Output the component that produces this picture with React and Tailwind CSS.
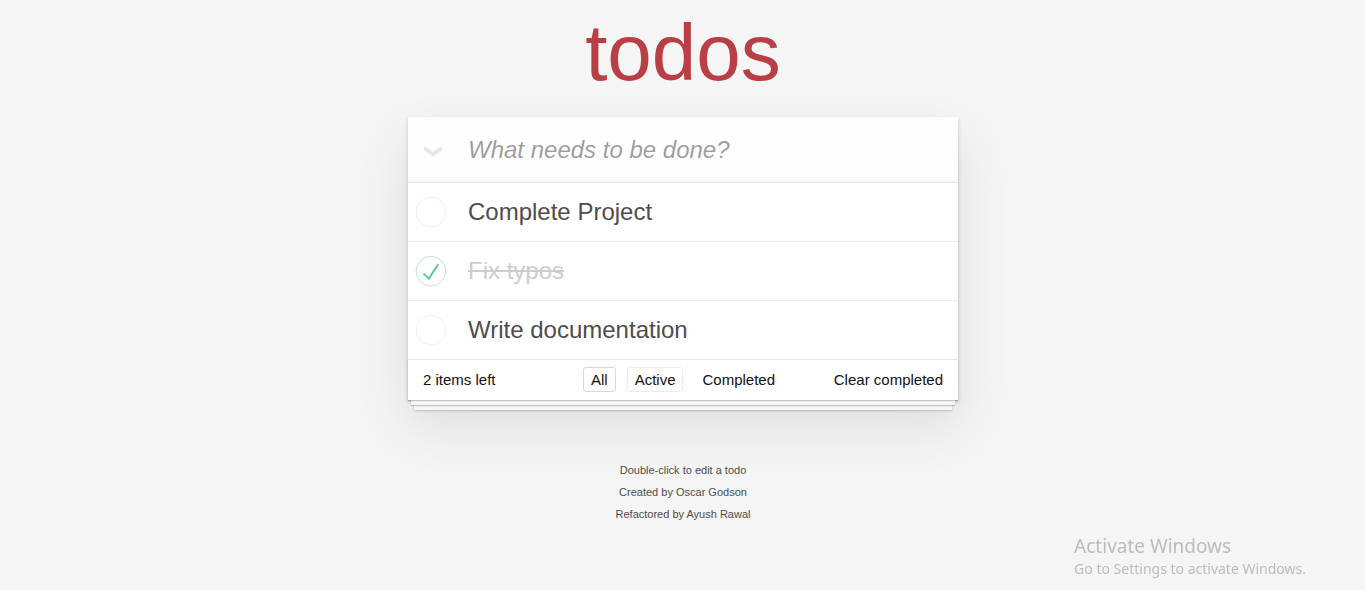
import { useState } from "react";

const initialTodos = [
  { id: 1, title: "Complete Project", done: false },
  { id: 2, title: "Fix typos", done: true },
  { id: 3, title: "Write documentation", done: false },
];

const filters = [
  { name: "All", border: "border-[#efd0d2]" },
  { name: "Active", border: "border-[#f9e6e8]" },
  { name: "Completed", border: "border-transparent" },
];

function ToggleMark({ done }) {
  return (
    <svg className="h-10 w-10" viewBox="-10 -18 100 135" fill="none" aria-hidden="true">
      <circle cx="50" cy="50" r="50" stroke={done ? "#bddad5" : "#ededed"} strokeWidth="3" />
      {done && (
        <path
          fill="#5dc2af"
          stroke="#5dc2af"
          strokeWidth="1"
          d="M72 25L42 71 27 56l-4 4 20 20 34-52z"
        />
      )}
    </svg>
  );
}

function TodoItem({ todo, onToggle }) {
  const id = `todo-${todo.id}`;
  return (
    <li className="flex h-[59px] items-center border-b border-[#ededed] last:h-[58px] last:border-b-0">
      <label htmlFor={id} className="relative flex w-15 shrink-0 cursor-pointer items-center">
        <input
          id={id}
          type="checkbox"
          className="sr-only"
          aria-label={todo.title}
          checked={todo.done}
          onChange={() => onToggle(todo.id)}
        />
        <ToggleMark done={todo.done} />
      </label>
      <span
        className={
          todo.done
            ? "text-2xl leading-7 text-[#cdcdcd] line-through"
            : "text-2xl leading-7 text-[#4d4d4d]"
        }
      >
        {todo.title}
      </span>
    </li>
  );
}

export default function App() {
  const [todos, setTodos] = useState(initialTodos);
  const [filter, setFilter] = useState("All");
  const [draft, setDraft] = useState("");

  const left = todos.filter((t) => !t.done).length;
  const visible = todos.filter(
    (t) => filter === "All" || (filter === "Completed" ? t.done : !t.done)
  );

  const toggle = (id) =>
    setTodos(todos.map((t) => (t.id === id ? { ...t, done: !t.done } : t)));

  const toggleAll = () => setTodos(todos.map((t) => ({ ...t, done: left > 0 })));

  const add = (e) => {
    e.preventDefault();
    if (!draft.trim()) return;
    setTodos([...todos, { id: Date.now(), title: draft.trim(), done: false }]);
    setDraft("");
  };

  return (
    <div className="min-h-screen bg-[#f5f5f5] pr-4 pl-[17px] font-['Liberation_Sans',Arial,sans-serif] text-[#111111]">
      <main className="mx-auto max-w-[550px]">
        <h1 className="pt-[7px] text-center text-[80px] leading-[92px] text-[#b83f45]">todos</h1>

        <section className="mt-[18px] bg-white shadow-[0_2px_4px_0_rgba(0,0,0,0.2),0_25px_50px_0_rgba(0,0,0,0.1)]">
          <form
            onSubmit={add}
            className="flex h-[65px] items-center bg-[#fefefe] shadow-[inset_0_-2px_1px_rgba(0,0,0,0.03)]"
          >
            <button
              type="button"
              aria-label="Mark all as complete"
              onClick={toggleAll}
              className="flex h-full w-15 shrink-0 items-center pt-1 pl-4"
            >
              <svg className="h-[11px] w-[18px]" viewBox="0 0 18 11" aria-hidden="true">
                <path fill="#e6e6e6" d="M0.2 0L9 6 17.8 0V4.4L9 10.4 0.2 4.4z" />
              </svg>
            </button>
            <input
              type="text"
              aria-label="New todo"
              placeholder="What needs to be done?"
              value={draft}
              onChange={(e) => setDraft(e.target.value)}
              className="h-full min-w-0 flex-1 bg-transparent text-2xl outline-none placeholder:text-black/40 placeholder:italic"
            />
          </form>

          <ul className="border-t border-[#e6e6e6]">
            {visible.map((todo) => (
              <TodoItem key={todo.id} todo={todo} onToggle={toggle} />
            ))}
          </ul>

          <footer className="grid grid-cols-[1fr_auto_1fr] items-center border-t border-[#e6e6e6] px-[15px] pt-[7px] pb-2 text-[15px] leading-[19px] shadow-[0_1px_1px_rgba(0,0,0,0.2),0_8px_0_-3px_#f6f6f6,0_9px_1px_-3px_rgba(0,0,0,0.2),0_16px_0_-6px_#f6f6f6,0_17px_2px_-6px_rgba(0,0,0,0.2)]">
            <span>{left} items left</span>
            <nav className="flex gap-[11px]">
              {filters.map(({ name, border }) => (
                <a
                  key={name}
                  href={`#/${name.toLowerCase()}`}
                  onClick={() => setFilter(name)}
                  className={`rounded-[3px] border px-[7px] py-[2px] ${border}`}
                >
                  {name}
                </a>
              ))}
            </nav>
            <button
              type="button"
              className="justify-self-end"
              onClick={() => setTodos(todos.filter((t) => !t.done))}
            >
              Clear completed
            </button>
          </footer>
        </section>
      </main>

      <footer className="mt-[59px] text-center text-[11px] leading-[22px] text-[#4d4d4d]">
        <p>Double-click to edit a todo</p>
        <p>Created by Oscar Godson</p>
        <p>Refactored by Ayush Rawal</p>
      </footer>

      <aside className="fixed right-[59px] bottom-[11px] font-['Noto_Sans','Open_Sans',sans-serif] text-[#bcbcbc]">
        <p className="text-[19px] leading-[25px]">Activate Windows</p>
        <p className="text-sm leading-5">Go to Settings to activate Windows.</p>
      </aside>
    </div>
  );
}
